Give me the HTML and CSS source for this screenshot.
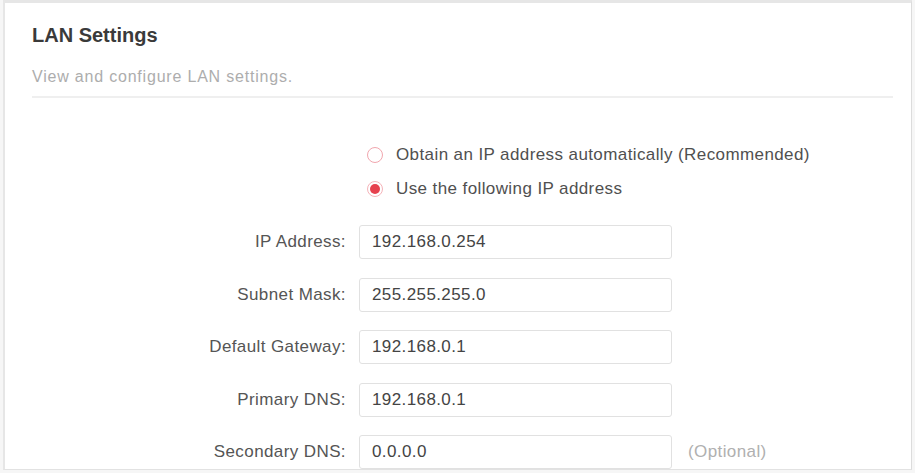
FILE: index.html
```html
<!DOCTYPE html>
<html lang="en">
<head>
<meta charset="utf-8">
<title>LAN Settings</title>
<link rel="stylesheet" href="styles.css">
</head>
<body>
<section class="card">
  <h1 class="title">LAN Settings</h1>
  <p class="desc">View and configure LAN settings.</p>

  <div class="radio-group">
    <label class="radio-row">
      <input type="radio" name="mode" class="radio">
      <span>Obtain an IP address automatically (Recommended)</span>
    </label>
    <label class="radio-row">
      <input type="radio" name="mode" class="radio" checked>
      <span>Use the following IP address</span>
    </label>
  </div>

  <div class="form">
    <div class="row">
      <span class="label">IP Address:</span>
      <input class="field" type="text" value="192.168.0.254">
    </div>
    <div class="row">
      <span class="label">Subnet Mask:</span>
      <input class="field" type="text" value="255.255.255.0">
    </div>
    <div class="row">
      <span class="label">Default Gateway:</span>
      <input class="field" type="text" value="192.168.0.1">
    </div>
    <div class="row">
      <span class="label">Primary DNS:</span>
      <input class="field" type="text" value="192.168.0.1">
    </div>
    <div class="row">
      <span class="label">Secondary DNS:</span>
      <input class="field" type="text" value="0.0.0.0">
      <span class="hint">(Optional)</span>
    </div>
  </div>
</section>
</body>
</html>
```

FILE: styles.css
```css
html, body {
  margin: 0;
  padding: 0;
}

body {
  height: 473px;
  overflow: hidden;
  background: #f6f6f6;
  font-family: "Liberation Sans", Arial, sans-serif;
  color: #555;
}

.card {
  box-sizing: border-box;
  width: 909px;
  margin-left: 3px;
  background: #fff;
  border-top: 3px solid #e6e6e6;
  border-left: 2px solid #e6e6e6;
  border-right: 1px solid #dcdcdc;
  border-bottom: 1px solid #e2e2e2;
  padding: 20px 18px 0 27px;
}

.title {
  margin: 0;
  font-size: 20px;
  line-height: 24px;
  font-weight: bold;
  color: #3a3a3a;
}

.desc {
  margin: 19.5px 0 0;
  padding-bottom: 9.5px;
  border-bottom: 2px solid #efefef;
  font-size: 16px;
  line-height: 20px;
  letter-spacing: 0.8px;
  color: #adadad;
}

.radio-group {
  margin: 39.5px 0 0 335px;
  display: flex;
  flex-direction: column;
}

.radio-row {
  display: flex;
  align-items: center;
  gap: 13px;
  height: 34px;
  font-size: 17px;
  letter-spacing: 0.4px;
  color: #505050;
}

.radio {
  appearance: none;
  -webkit-appearance: none;
  box-sizing: border-box;
  width: 16px;
  height: 16px;
  margin: 0;
  border: 1.5px solid #f1a6ae;
  border-radius: 50%;
  background: #fff;
  display: grid;
  place-items: center;
}

.radio:checked {
  border-color: #f5b3b9;
}

.radio:checked::after {
  content: "";
  width: 10px;
  height: 10px;
  border-radius: 50%;
  background: #e6414e;
}

.form {
  margin-top: 19.5px;
  display: flex;
  flex-direction: column;
  gap: 18.5px;
}

.row {
  display: flex;
  align-items: center;
  gap: 13px;
  height: 34px;
  font-size: 17px;
  letter-spacing: 0.4px;
}

.label {
  width: 314px;
  text-align: right;
  color: #555;
}

.field {
  box-sizing: border-box;
  width: 313px;
  height: 34px;
  margin: 0;
  padding: 0 12px;
  border: 1px solid #e1e1e1;
  border-radius: 3px;
  background: #fff;
  font-family: "Liberation Sans", Arial, sans-serif;
  font-size: 17px;
  letter-spacing: 0.4px;
  color: #444;
  outline: none;
}

.hint {
  margin-left: 3px;
  color: #b0b0b0;
}
```
